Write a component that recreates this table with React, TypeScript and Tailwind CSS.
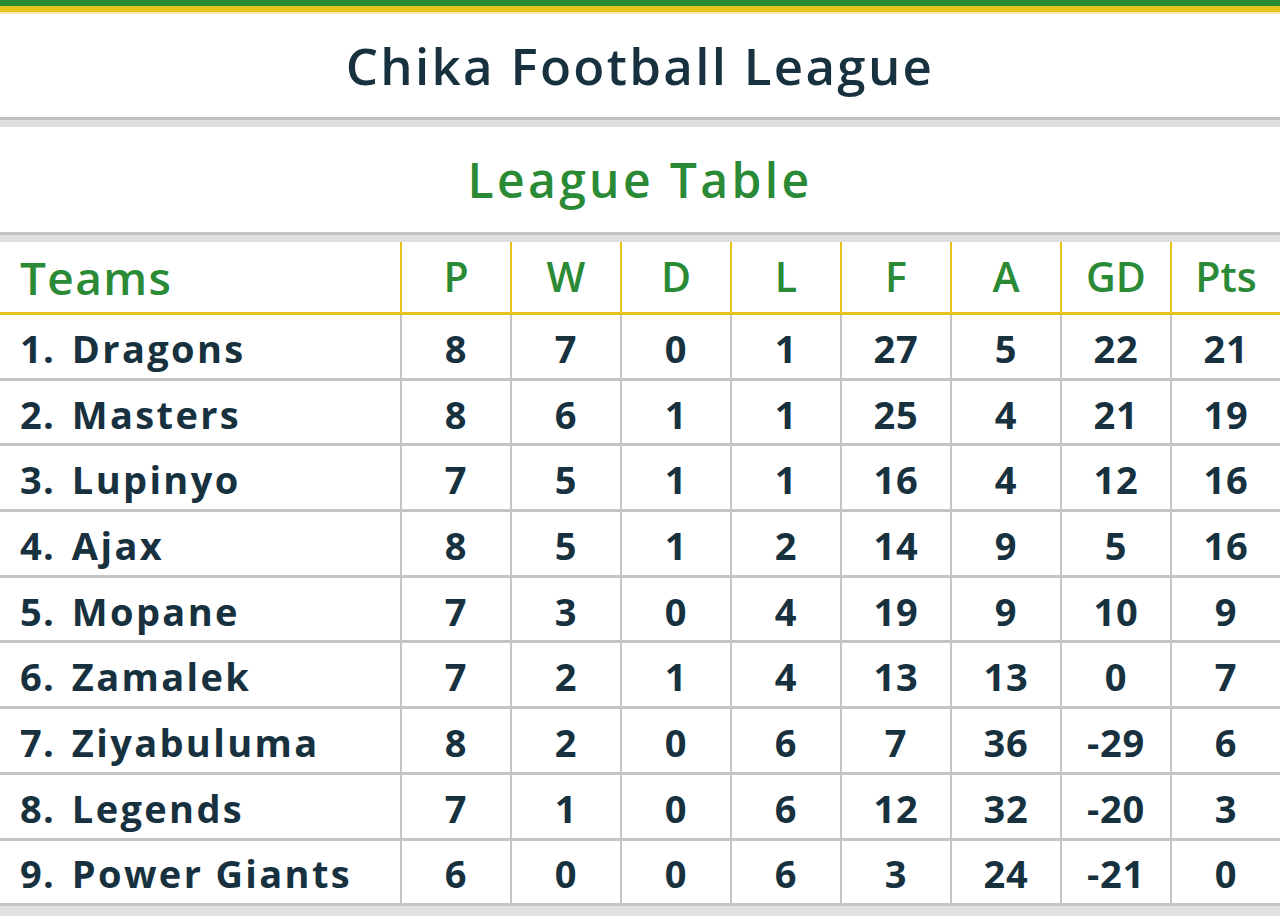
import React from "react";

type Row = {
  name: string;
  p: number;
  w: number;
  d: number;
  l: number;
  f: number;
  a: number;
  gd: number;
  pts: number;
};

const rows: Row[] = [
  { name: "Dragons", p: 8, w: 7, d: 0, l: 1, f: 27, a: 5, gd: 22, pts: 21 },
  { name: "Masters", p: 8, w: 6, d: 1, l: 1, f: 25, a: 4, gd: 21, pts: 19 },
  { name: "Lupinyo", p: 7, w: 5, d: 1, l: 1, f: 16, a: 4, gd: 12, pts: 16 },
  { name: "Ajax", p: 8, w: 5, d: 1, l: 2, f: 14, a: 9, gd: 5, pts: 16 },
  { name: "Mopane", p: 7, w: 3, d: 0, l: 4, f: 19, a: 9, gd: 10, pts: 9 },
  { name: "Zamalek", p: 7, w: 2, d: 1, l: 4, f: 13, a: 13, gd: 0, pts: 7 },
  { name: "Ziyabuluma", p: 8, w: 2, d: 0, l: 6, f: 7, a: 36, gd: -29, pts: 6 },
  { name: "Legends", p: 7, w: 1, d: 0, l: 6, f: 12, a: 32, gd: -20, pts: 3 },
  { name: "Power Giants", p: 6, w: 0, d: 0, l: 6, f: 3, a: 24, gd: -21, pts: 0 },
];

const headers = ["P", "W", "D", "L", "F", "A", "GD", "Pts"];

function Band() {
  return <div className="h-[10px] border-t-[3px] border-[#c2c2c2] bg-[#e0e0e0]" />;
}

export default function App() {
  return (
    <div
      className="w-[1280px] h-[916px] overflow-hidden bg-white"
      style={{ fontFamily: '"Open Sans", "DejaVu Sans", sans-serif' }}
    >
      <div className="h-[6px] bg-[#2b8a35]" />
      <div className="h-[6px] bg-[#e8c31b]" />
      <div className="h-[2px] bg-[#f7ecb0]" />

      <div className="h-[103px] flex items-center justify-center">
        <h1 className="text-[51px] font-semibold tracking-[0.045em] text-[#17313f] leading-none">
          Chika Football League
        </h1>
      </div>
      <Band />

      <div className="h-[105px] flex items-center justify-center">
        <h2 className="text-[48px] font-semibold tracking-[0.07em] text-[#2a8a35] leading-none">
          League Table
        </h2>
      </div>
      <Band />

      <div className="grid grid-cols-[400px_repeat(8,110px)]">
        <div className="h-[73px] flex items-center pl-[20px] border-b-[3px] border-[#e8c31b] text-[46px] font-semibold tracking-[0.03em] text-[#2a8a35]">
          Teams
        </div>
        {headers.map((h) => (
          <div
            key={h}
            className="h-[73px] flex items-center justify-center border-l-2 border-b-[3px] border-[#e8c31b] text-[41px] font-semibold text-[#2a8a35]"
          >
            {h}
          </div>
        ))}

        {rows.map((r, i) => {
          const cells = [r.p, r.w, r.d, r.l, r.f, r.a, r.gd, r.pts];
          return (
            <React.Fragment key={r.name}>
              <div className="h-[65.7px] flex items-center pl-[20px] pt-[4px] border-b-[3px] border-[#c4c4c4] text-[38px] font-bold text-[#17313f] whitespace-nowrap">
                <span className="tracking-[0.03em]">{i + 1}.</span>
                <span className="ml-[17px] tracking-[0.062em]">{r.name}</span>
              </div>
              {cells.map((c, j) => (
                <div
                  key={j}
                  className="h-[65.7px] flex items-center justify-center pt-[4px] border-l-2 border-b-[3px] border-[#c4c4c4] text-[38px] font-bold tracking-[0.02em] text-[#17313f]"
                >
                  {c}
                </div>
              ))}
            </React.Fragment>
          );
        })}
      </div>
      <div className="h-[12px] bg-[#e0e0e0]" />
    </div>
  );
}
